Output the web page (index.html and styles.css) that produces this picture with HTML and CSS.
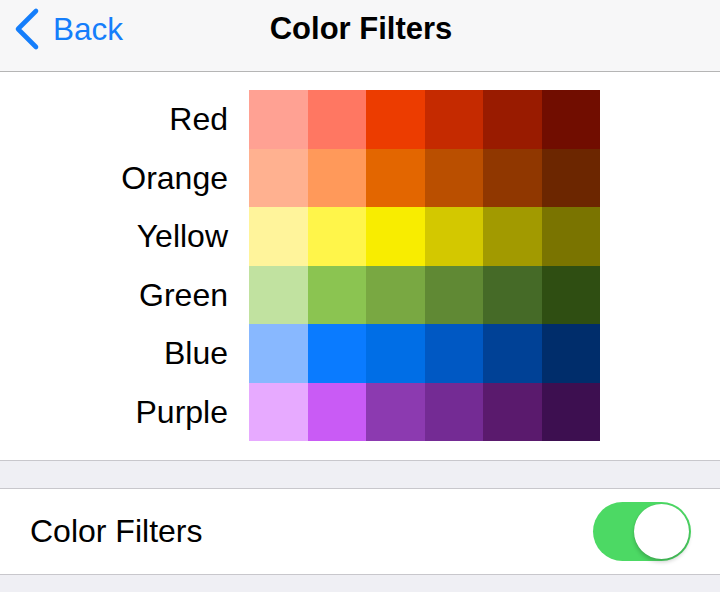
FILE: index.html
```html
<!DOCTYPE html>
<html>
<head>
<meta charset="utf-8">
<link rel="stylesheet" href="styles.css">
</head>
<body>
<div class="screen">
  <header class="nav">
    <div class="back">
      <svg class="chev" width="30" height="44" viewBox="0 0 30 44"><path d="M25 4 L7 22 L25 40" fill="none" stroke="#157efb" stroke-width="4.6" stroke-linecap="round" stroke-linejoin="round"/></svg>
      <span>Back</span>
    </div>
    <div class="title">Color Filters</div>
  </header>
  <section class="palette">
    <div class="labels">
      <div>Red</div><div>Orange</div><div>Yellow</div><div>Green</div><div>Blue</div><div>Purple</div>
    </div>
    <div class="grid">
      <i class="c r1"></i><i class="c r2"></i><i class="c r3"></i><i class="c r4"></i><i class="c r5"></i><i class="c r6"></i>
      <i class="c o1"></i><i class="c o2"></i><i class="c o3"></i><i class="c o4"></i><i class="c o5"></i><i class="c o6"></i>
      <i class="c y1"></i><i class="c y2"></i><i class="c y3"></i><i class="c y4"></i><i class="c y5"></i><i class="c y6"></i>
      <i class="c g1"></i><i class="c g2"></i><i class="c g3"></i><i class="c g4"></i><i class="c g5"></i><i class="c g6"></i>
      <i class="c b1"></i><i class="c b2"></i><i class="c b3"></i><i class="c b4"></i><i class="c b5"></i><i class="c b6"></i>
      <i class="c p1"></i><i class="c p2"></i><i class="c p3"></i><i class="c p4"></i><i class="c p5"></i><i class="c p6"></i>
    </div>
  </section>
  <div class="gap"></div>
  <section class="row">
    <span class="row-label">Color Filters</span>
    <div class="toggle"><div class="knob"></div></div>
  </section>
  <div class="tail"></div>
</div>
</body>
</html>
```
FILE: styles.css
```css
html, body { margin: 0; padding: 0; }
body {
  width: 720px; height: 592px; overflow: hidden;
  font-family: "Liberation Sans", Arial, sans-serif;
  background: #efeff4;
  color: #000;
}
.screen { display: flex; flex-direction: column; height: 592px; }
.nav {
  height: 71px; flex: none;
  background: #f7f7f8;
  border-bottom: 1px solid #b5b5b5;
  position: relative;
  display: flex; align-items: center; justify-content: center;
}
.back {
  position: absolute; left: 11px; top: 7px;
  display: flex; align-items: center; gap: 12px;
  color: #157efb; font-size: 31.5px;
}
.chev { display: block; }
.title { font-size: 31px; font-weight: bold; letter-spacing: 0; margin-top: -14px; margin-left: 2px; }
.palette {
  background: #fff; height: 389px; flex: none;
  display: flex; padding-top: 18px; box-sizing: border-box;
  border-bottom: 1px solid #c8c7cc;
}
.labels { width: 228px; text-align: right; font-size: 32px; }
.labels div { height: 58.5px; line-height: 58.5px; }
.grid {
  margin-left: 21px;
  width: 351px; height: 351px;
  display: grid; grid-template-columns: repeat(6, 1fr); grid-template-rows: repeat(6, 1fr);
}
.c { display: block; }
.r1{background:#ffa193}.r2{background:#ff7762}.r3{background:#ec3c00}.r4{background:#c52a00}.r5{background:#991b00}.r6{background:#710d00}
.o1{background:#ffb190}.o2{background:#ff995a}.o3{background:#e36600}.o4{background:#ba4f00}.o5{background:#903700}.o6{background:#6c2600}
.y1{background:#fff49b}.y2{background:#fff54a}.y3{background:#f8ed00}.y4{background:#d3c800}.y5{background:#a29a00}.y6{background:#7a7400}
.g1{background:#c1e2a0}.g2{background:#8bc451}.g3{background:#79a842}.g4{background:#608934}.g5{background:#456a27}.g6{background:#2f4e12}
.b1{background:#88b8ff}.b2{background:#0a7bff}.b3{background:#006ee6}.b4{background:#0058c3}.b5{background:#004196}.b6{background:#002d6b}
.p1{background:#e7aaff}.p2{background:#c95bf5}.p3{background:#8c3ab0}.p4{background:#742b94}.p5{background:#5a1a6d}.p6{background:#3d0f50}
.gap { height: 27px; flex: none; border-bottom: 1px solid #c8c7cc; }
.row {
  height: 85px; flex: none; background: #fff;
  border-bottom: 1px solid #c8c7cc;
  display: flex; align-items: center; justify-content: space-between;
  padding: 0 29px 0 30px;
}
.row-label { font-size: 32px; }
.toggle {
  width: 98px; height: 59px; border-radius: 30px;
  background: #4cd964; position: relative;
}
.knob {
  position: absolute; right: 2px; top: 2px;
  width: 55px; height: 55px; border-radius: 50%;
  background: #fff;
  box-shadow: 0 3px 4px rgba(0,0,0,0.2), 0 0 1px rgba(0,0,0,0.15);
}
.tail { flex: 1; }
```
